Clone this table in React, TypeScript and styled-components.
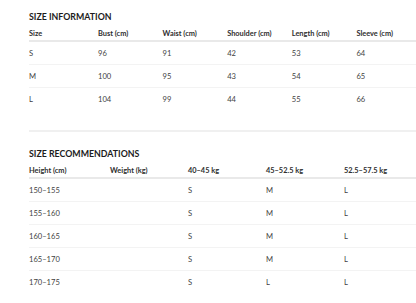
import styled, { createGlobalStyle } from "styled-components";

const GlobalStyle = createGlobalStyle`
  body {
    margin: 0;
    background: #ffffff;
    font-family: Lato, "Open Sans", sans-serif;
    overflow: hidden;
  }
`;

const Page = styled.div`
  padding: 10px 0 0 29px;
  width: 392px;
`;

const Section = styled.section<{ $divided?: boolean }>`
  padding-top: ${(p) => (p.$divided ? "15px" : "0")};
  padding-bottom: ${(p) => (p.$divided ? "0" : "20px")};
  border-top: ${(p) => (p.$divided ? "2px solid #f0f0f0" : "none")};
`;

const Title = styled.h3`
  margin: 0 0 3px;
  height: 14px;
  line-height: 14px;
  font-size: 8.8px;
  font-weight: 700;
  color: #1c1c1c;
`;

const Row = styled.div<{ $cols: string; $head?: boolean; $last?: boolean }>`
  display: grid;
  grid-template-columns: ${(p) => p.$cols};
  align-items: center;
  height: ${(p) => (p.$head ? "13px" : "22px")};
  border-bottom: ${(p) =>
    p.$head ? "2px solid #e9e9e9" : p.$last ? "none" : "1px solid #f3f3f3"};
`;

const Cell = styled.div<{ $head?: boolean }>`
  font-size: ${(p) => (p.$head ? "7.4px" : "7.6px")};
  font-weight: ${(p) => (p.$head ? 700 : 400)};
  color: ${(p) => (p.$head ? "#2e2e2e" : "#3f3f3f")};
  white-space: nowrap;
`;

const sizeCols = "69px repeat(5, 64.6px)";
const recCols = "81px repeat(4, 78px)";

const sizeHead = ["Size", "Bust (cm)", "Waist (cm)", "Shoulder (cm)", "Length (cm)", "Sleeve (cm)"];
const sizeRows = [
  ["S", "96", "91", "42", "53", "64"],
  ["M", "100", "95", "43", "54", "65"],
  ["L", "104", "99", "44", "55", "66"],
];

const recHead = ["Height (cm)", "Weight (kg)", "40–45 kg", "45–52.5 kg", "52.5–57.5 kg"];
const recRows = [
  ["150–155", "", "S", "M", "L"],
  ["155–160", "", "S", "M", "L"],
  ["160–165", "", "S", "M", "L"],
  ["165–170", "", "S", "M", "L"],
  ["170–175", "", "S", "L", "L"],
];

function Table({ cols, head, rows }: { cols: string; head: string[]; rows: string[][] }) {
  return (
    <div>
      <Row $cols={cols} $head>
        {head.map((h) => (
          <Cell key={h} $head>
            {h}
          </Cell>
        ))}
      </Row>
      {rows.map((r, i) => (
        <Row key={i} $cols={cols} $last={i === rows.length - 1}>
          {r.map((c, j) => (
            <Cell key={j}>{c}</Cell>
          ))}
        </Row>
      ))}
    </div>
  );
}

export default function App() {
  return (
    <>
      <GlobalStyle />
      <Page>
        <Section>
          <Title>SIZE INFORMATION</Title>
          <Table cols={sizeCols} head={sizeHead} rows={sizeRows} />
        </Section>
        <Section $divided>
          <Title>SIZE RECOMMENDATIONS</Title>
          <Table cols={recCols} head={recHead} rows={recRows} />
        </Section>
      </Page>
    </>
  );
}
